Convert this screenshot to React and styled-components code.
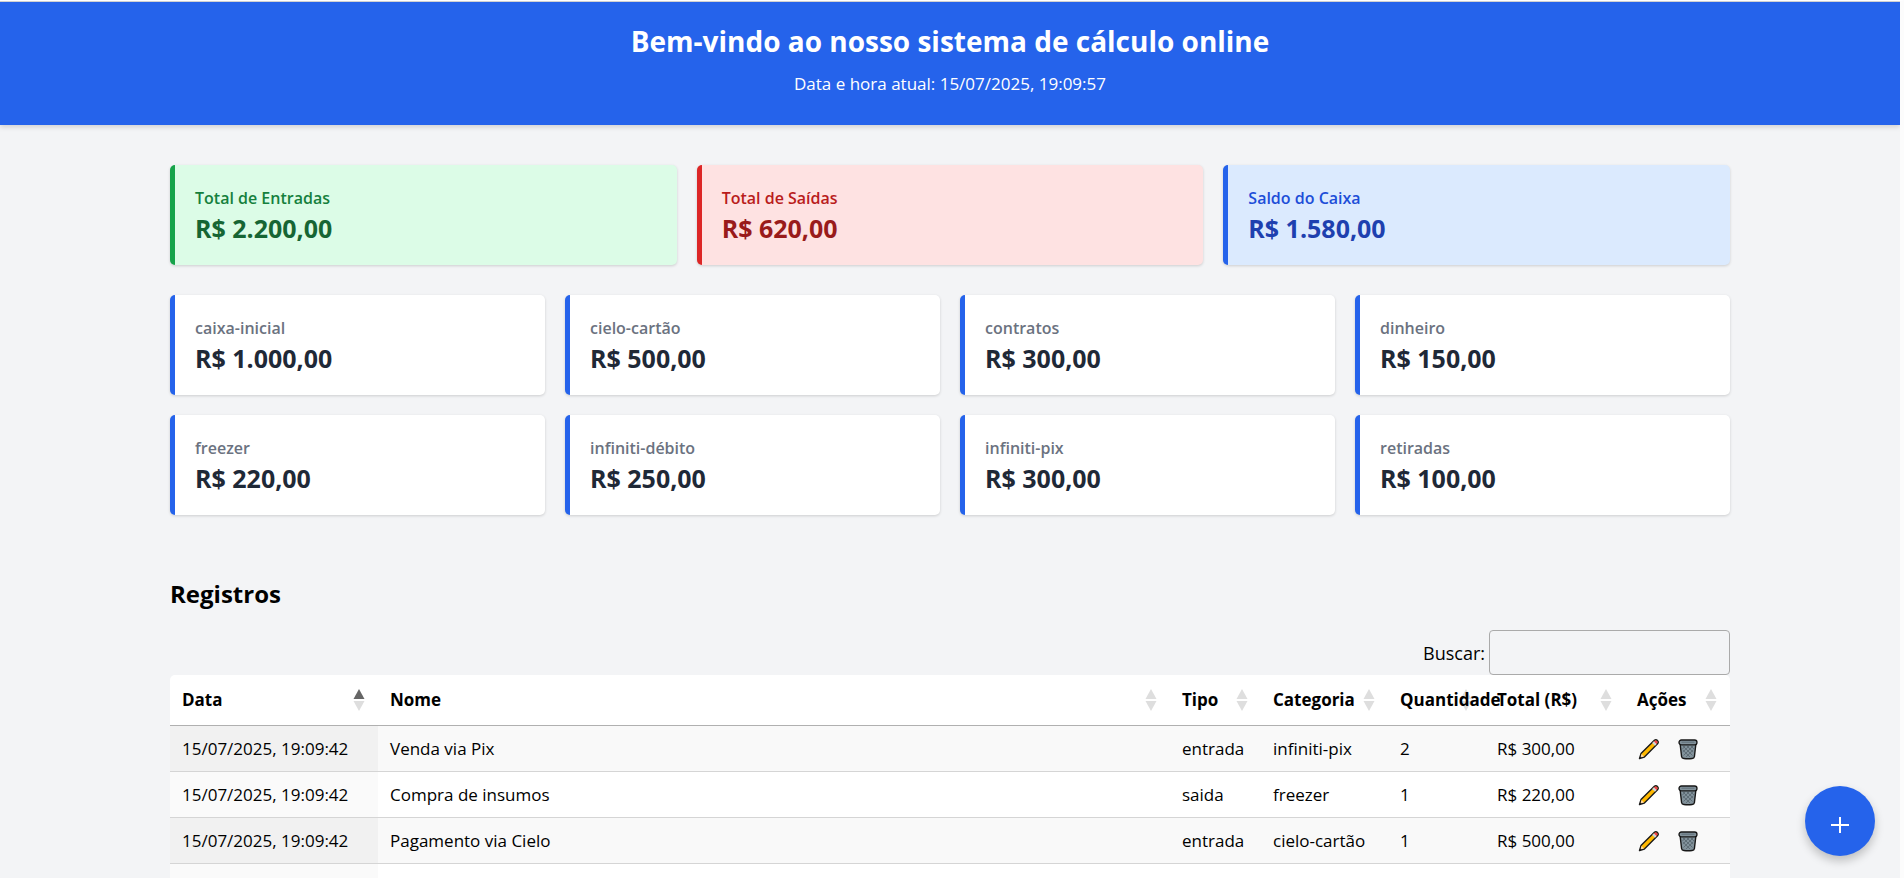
import React, { useState } from "react";
import styled, { createGlobalStyle } from "styled-components";

const GlobalStyle = createGlobalStyle`
  * { box-sizing: border-box; }
  body {
    margin: 0;
    background: #f3f4f6;
    color: #000;
    font-family: "Segoe UI", "Open Sans", "Noto Sans", sans-serif;
    font-size: 18px;
    line-height: 30px;
  }
  h1, h2, p { margin: 0; }
`;

const Page = styled.div`
  height: 100vh;
  overflow-y: auto;
  scrollbar-width: none;
  border-top: 1px solid #fff;
  border-right: 4px solid #fcfcfc;
`;

const Header = styled.header`
  display: flex;
  flex-direction: column;
  align-items: center;
  gap: 9px;
  padding: 20px 20px 26px;
  border-top: 1px solid #d1d1d1;
  background: #2563eb;
  color: #fff;
  text-align: center;
  box-shadow: 0 2px 5px rgba(0, 0, 0, 0.15);
`;

const Title = styled.h1`
  font-size: 28px;
  line-height: 38px;
  font-weight: 700;
`;

const Clock = styled.p`
  font-size: 17px;
  line-height: 30px;
`;

const Container = styled.main`
  max-width: 1600px;
  margin: 0 auto;
  padding: 40px 20px;
`;

const Grid = styled.section`
  display: grid;
  grid-template-columns: repeat(${(p) => p.$columns}, 1fr);
  gap: 20px;
  margin-bottom: ${(p) => p.$after};
`;

const tones = {
  green: ["#dcfce7", "#16a34a", "#15803d", "#166534"],
  red: ["#fee2e2", "#dc2626", "#b91c1c", "#991b1b"],
  blue: ["#dbeafe", "#2563eb", "#1d4ed8", "#1e40af"],
  plain: ["#ffffff", "#2563eb", "#6b7280", "#1f2937"],
};

const CardBox = styled.article`
  padding: 20px;
  background: ${(p) => tones[p.$tone][0]};
  border-left: 5px solid ${(p) => tones[p.$tone][1]};
  border-radius: 5px;
  box-shadow: 0 1px 3px rgba(0, 0, 0, 0.16);
`;

const CardLabel = styled.p`
  color: ${(p) => tones[p.$tone][2]};
  font-size: 16px;
  line-height: 27px;
  font-weight: 600;
`;

const CardValue = styled.p`
  color: ${(p) => tones[p.$tone][3]};
  font-size: 25px;
  line-height: 33px;
  font-weight: 700;
`;

const SectionTitle = styled.h2`
  font-size: 24px;
  line-height: 37px;
  font-weight: 700;
  margin-bottom: 18px;
`;

const SearchBar = styled.div`
  display: flex;
  justify-content: flex-end;
  align-items: center;
  gap: 4px;
`;

const SearchInput = styled.input`
  width: 241px;
  height: 45px;
  padding: 6px;
  border: 1px solid #aaa;
  border-radius: 4px;
  background: transparent;
  font: inherit;
`;

const Table = styled.table`
  width: 100%;
  table-layout: fixed;
  border-spacing: 0;
  background: #fff;
  border-radius: 5px;
  font-size: 17px;
`;

const Col = styled.col`
  width: ${(p) => p.$width};
`;

const HeadCell = styled.th`
  height: 51px;
  padding: 0 13px 0 12px;
  border-bottom: 1px solid #b0b0b0;
  text-align: left;
  font-weight: 700;
  white-space: nowrap;
`;

const HeadInner = styled.div`
  display: grid;
  grid-template-columns: minmax(0, 1fr) 12px;
  align-items: center;
`;

const HeadText = styled.span`
  position: relative;
  z-index: 1;
`;

const Cell = styled.td`
  height: 46px;
  padding: 0 12px;
  border-bottom: 1px solid #d5d5d5;
  line-height: 28px;
  white-space: nowrap;
  background: ${(p) => (p.$sorted ? (p.$odd ? "#f1f1f1" : "#fafafa") : p.$odd ? "#f9f9f9" : "#fff")};
`;

const Actions = styled.div`
  display: flex;
  gap: 15px;
`;

const IconButton = styled.button`
  display: flex;
  padding: 0;
  border: 0;
  background: none;
  cursor: pointer;
`;

const AddButton = styled.button`
  position: fixed;
  right: 29px;
  bottom: 22px;
  width: 70px;
  height: 70px;
  display: grid;
  place-items: center;
  padding: 8px 0 0;
  border: 0;
  border-radius: 50%;
  background: #2563eb;
  color: #fff;
  box-shadow: 0 5px 10px rgba(0, 0, 0, 0.22);
  cursor: pointer;
`;

function SortIcon({ active }) {
  return (
    <svg width="12" height="24" viewBox="0 0 12 24" aria-hidden="true">
      <path d="M0.5 11 L6 1 L11.5 11Z" fill={active ? "#666" : "#dedede"} />
      <path d="M0.5 13 L6 23 L11.5 13Z" fill="#dedede" />
    </svg>
  );
}

function PencilIcon() {
  return (
    <svg width="24" height="24" viewBox="0 0 24 24" aria-hidden="true">
      <path d="M2.5 21.5 L4 16.6 L17.4 3.2 Q19 2 20.5 3.5 Q22 5 20.8 6.6 L7.4 20 Z" fill="#ffb900" stroke="#1b1b1b" strokeWidth="1.4" strokeLinejoin="round" />
      <path d="M3.4 20.6 L4.6 17 L7 19.4 Z" fill="#ffd9a8" />
      <path d="M15.2 6 L16.9 4.3 L19.7 7.1 L18 8.8 Z" fill="#d2d5d8" />
      <path d="M17 4.3 Q18.8 2.8 20 4 Q21.2 5.2 19.7 7.1 Z" fill="#f03a55" />
      <path d="M2.5 21.5 L3.2 19.2 L4.8 20.8 Z" fill="#1b1b1b" />
    </svg>
  );
}

function TrashIcon() {
  return (
    <svg width="24" height="24" viewBox="0 0 24 24" aria-hidden="true">
      <path d="M4 6 L5.6 19.6 Q5.9 21.2 8 21.5 Q12 22 16 21.5 Q18.1 21.2 18.4 19.6 L20 6 Z" fill="#82929b" stroke="#171717" strokeWidth="1.4" />
      <path d="M7 9 L16.5 18.5 M11 9 L17.2 15 M15 9 L18 12 M6.8 13 L14 20 M17 9 L7.5 18.5 M13 9 L6.8 15 M9 9 L6.5 12 M17.2 13 L10 20" stroke="#56636c" strokeWidth="0.8" />
      <rect x="3" y="3" width="18" height="4.8" rx="2.4" fill="#83939c" stroke="#171717" strokeWidth="1.3" />
      <path d="M6 5.2 H18" stroke="#6b7a83" strokeWidth="1.4" strokeLinecap="round" />
    </svg>
  );
}

const totals = [
  ["Total de Entradas", "R$ 2.200,00", "green"],
  ["Total de Saídas", "R$ 620,00", "red"],
  ["Saldo do Caixa", "R$ 1.580,00", "blue"],
];

const categories = [
  ["caixa-inicial", "R$ 1.000,00"],
  ["cielo-cartão", "R$ 500,00"],
  ["contratos", "R$ 300,00"],
  ["dinheiro", "R$ 150,00"],
  ["freezer", "R$ 220,00"],
  ["infiniti-débito", "R$ 250,00"],
  ["infiniti-pix", "R$ 300,00"],
  ["retiradas", "R$ 100,00"],
];

const columns = [
  ["Data", "208px"],
  ["Nome", "auto"],
  ["Tipo", "91px"],
  ["Categoria", "127px"],
  ["Quantidade", "97px"],
  ["Total (R$)", "140px"],
  ["Ações", "105px"],
];

const records = [
  ["15/07/2025, 19:09:42", "Venda via Pix", "entrada", "infiniti-pix", "2", "R$ 300,00"],
  ["15/07/2025, 19:09:42", "Compra de insumos", "saida", "freezer", "1", "R$ 220,00"],
  ["15/07/2025, 19:09:42", "Pagamento via Cielo", "entrada", "cielo-cartão", "1", "R$ 500,00"],
  ["", "", "", "", "", ""],
];

function Card({ label, value, tone = "plain" }) {
  return (
    <CardBox $tone={tone}>
      <CardLabel $tone={tone}>{label}</CardLabel>
      <CardValue $tone={tone}>{value}</CardValue>
    </CardBox>
  );
}

export default function App() {
  const [query, setQuery] = useState("");
  const rows = records.filter((r) => r.join(" ").toLowerCase().includes(query.toLowerCase()));
  return (
    <Page>
      <GlobalStyle />
      <Header>
        <Title>Bem-vindo ao nosso sistema de cálculo online</Title>
        <Clock>Data e hora atual: 15/07/2025, 19:09:57</Clock>
      </Header>
      <Container>
        <Grid $columns={3} $after="30px">
          {totals.map(([label, value, tone]) => (
            <Card key={label} label={label} value={value} tone={tone} />
          ))}
        </Grid>
        <Grid $columns={4} $after="60px">
          {categories.map(([label, value]) => (
            <Card key={label} label={label} value={value} />
          ))}
        </Grid>
        <SectionTitle>Registros</SectionTitle>
        <SearchBar>
          <label htmlFor="search">Buscar:</label>
          <SearchInput id="search" type="search" value={query} onChange={(e) => setQuery(e.target.value)} />
        </SearchBar>
        <Table>
          <colgroup>
            {columns.map(([name, width]) => (
              <Col key={name} $width={width} />
            ))}
          </colgroup>
          <thead>
            <tr>
              {columns.map(([name], i) => (
                <HeadCell key={name} scope="col">
                  <HeadInner>
                    <HeadText>{name}</HeadText>
                    <SortIcon active={i === 0} />
                  </HeadInner>
                </HeadCell>
              ))}
            </tr>
          </thead>
          <tbody>
            {rows.map((row, r) => (
              <tr key={r}>
                {row.map((value, c) => (
                  <Cell key={c} $odd={r % 2 === 0} $sorted={c === 0}>{value}</Cell>
                ))}
                <Cell $odd={r % 2 === 0}>
                  {row[0] && (
                    <Actions>
                      <IconButton aria-label="Editar"><PencilIcon /></IconButton>
                      <IconButton aria-label="Excluir"><TrashIcon /></IconButton>
                    </Actions>
                  )}
                </Cell>
              </tr>
            ))}
          </tbody>
        </Table>
      </Container>
      <AddButton aria-label="Adicionar registro">
        <svg width="18" height="18" viewBox="0 0 18 18" aria-hidden="true">
          <path d="M9 1 V17 M0 9 H18" stroke="#fff" strokeWidth="2" />
        </svg>
      </AddButton>
    </Page>
  );
}
